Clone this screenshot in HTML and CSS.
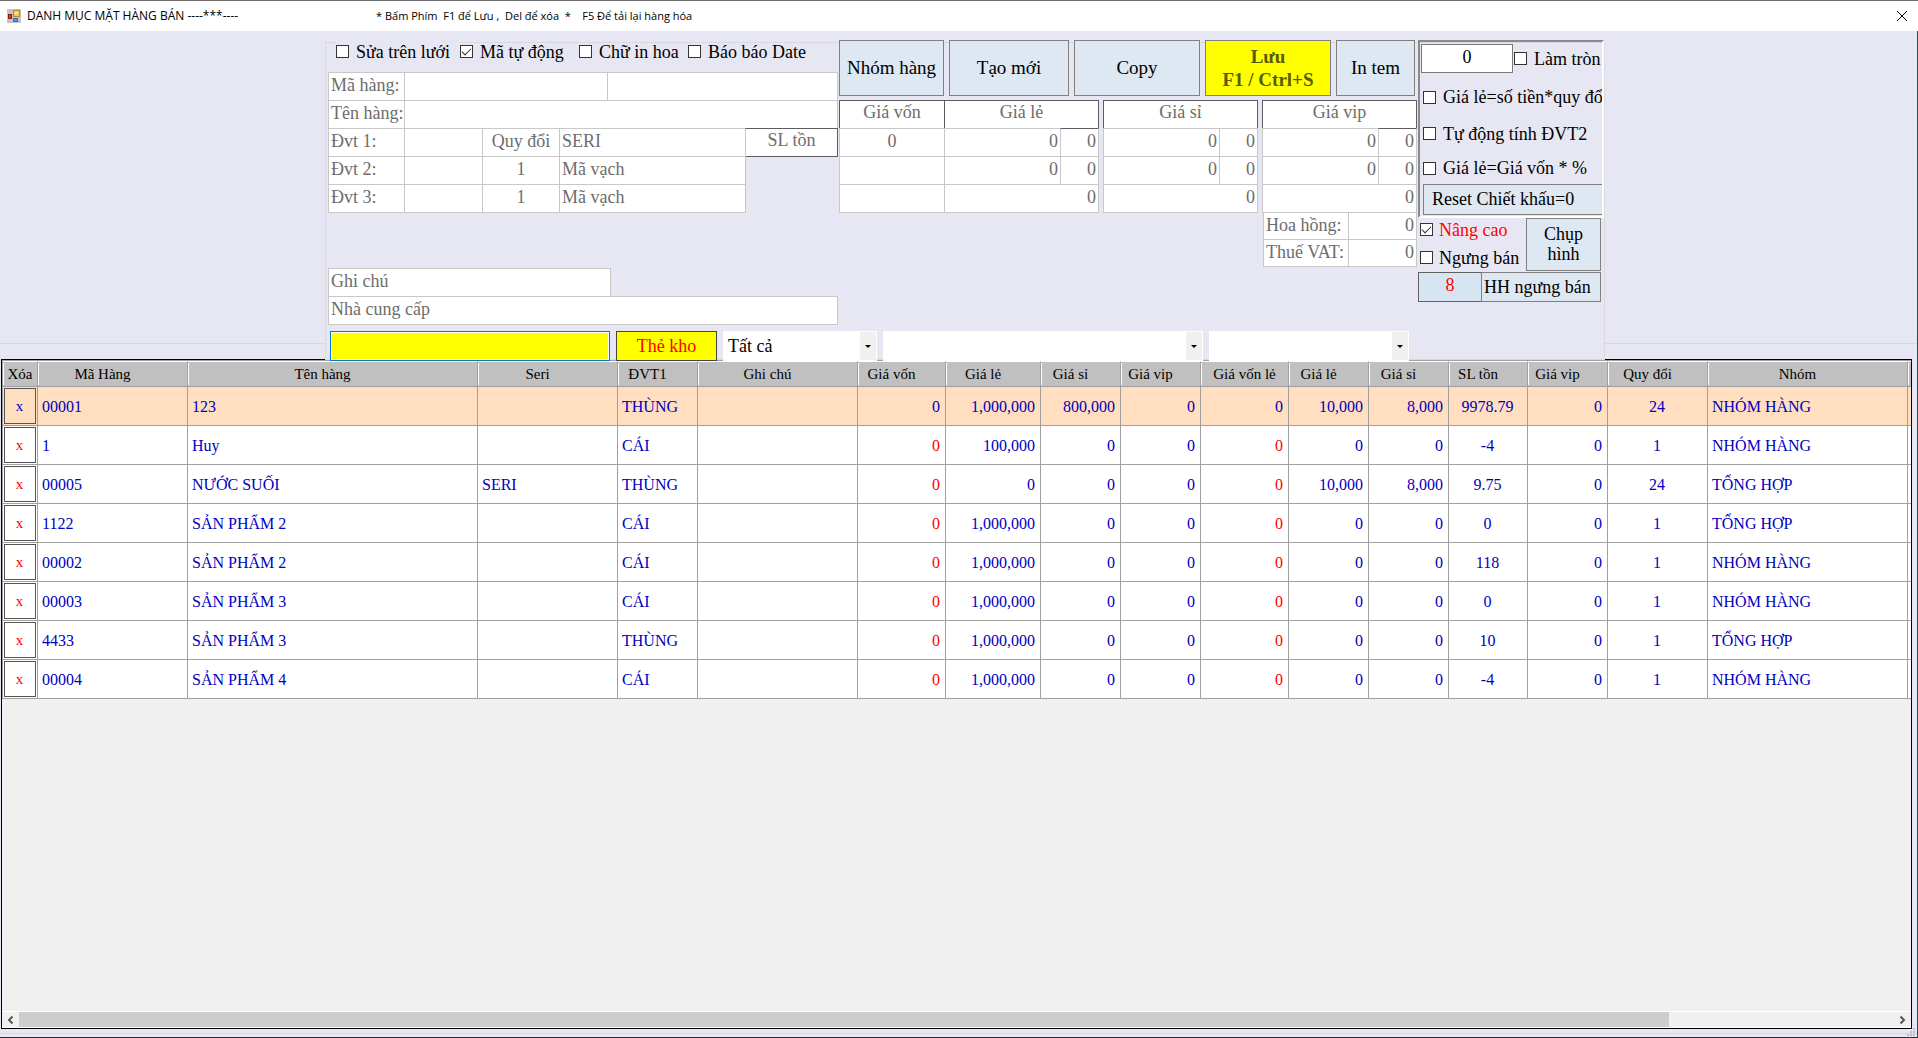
FILE: index.html
```html
<!DOCTYPE html>
<html lang="vi">
  <head>
    <meta charset="UTF-8" />
    <title>DANH MỤC MẶT HÀNG BÁN</title>
    <link rel="stylesheet" href="styles.css" />
  </head>
  <body>
    <header class="titlebar">
      <svg class="app-icon" width="14" height="14" viewBox="0 0 14 14">
        <rect width="14" height="14" fill="#c4c4c4" />
        <rect x="1.5" y="5.5" width="3" height="4" fill="#d8392b" stroke="#8c1a10" />
        <rect x="6.5" y="1.5" width="6" height="6" fill="#fbc94c" stroke="#c08a14" />
        <rect x="6.5" y="9.5" width="4" height="3" fill="#5b93f0" stroke="#3a6cd0" />
        <rect x="8" y="3" width="3" height="2" fill="#fde39a" />
      </svg>
      <h1 class="title">DANH MỤC MẶT HÀNG BÁN ----***----</h1>
      <span class="hint">* Bấm Phím  F1 để Lưu ,  Del để xóa  *    F5 Để tải lại hàng hóa</span>
      <button class="close" aria-label="Đóng">
        <svg width="10" height="10" viewBox="0 0 10 10"><path d="M0 0 L10 10 M10 0 L0 10" stroke="#000" fill="none" /></svg>
      </button>
    </header>

    <main class="workspace">
      <div class="editor">
        <div class="side-area"></div>
        <section class="group">
          <div class="group-top">
            <div class="info">
              <div class="options">
                <label class="check check-first"><input type="checkbox" />Sửa trên lưới</label>
                <label class="check"><input type="checkbox" checked />Mã tự động</label>
                <label class="check"><input type="checkbox" />Chữ in hoa</label>
                <label class="check"><input type="checkbox" />Báo báo Date</label>
              </div>
              <div class="row">
                <label class="cell w-label" for="ma">Mã hàng:</label>
                <input class="cell w-code" id="ma" type="text" />
                <input class="cell grow" type="text" aria-label="Mã phụ" />
              </div>
              <div class="row">
                <label class="cell w-label" for="ten">Tên hàng:</label>
                <input class="cell grow" id="ten" type="text" />
              </div>
              <div class="row">
                <label class="cell w-label" for="dvt1">Đvt 1:</label>
                <input class="cell w-unit" id="dvt1" type="text" />
                <span class="cell w-rate center">Quy đổi</span>
                <input class="cell w-seri" type="text" placeholder="SERI" aria-label="Seri" />
                <span class="cell w-stock center head">SL tồn</span>
              </div>
              <div class="row">
                <label class="cell w-label" for="dvt2">Đvt 2:</label>
                <input class="cell w-unit" id="dvt2" type="text" />
                <input class="cell w-rate center" type="text" value="1" aria-label="Quy đổi 2" />
                <input class="cell w-seri" type="text" placeholder="Mã vạch" aria-label="Mã vạch 2" />
              </div>
              <div class="row">
                <label class="cell w-label" for="dvt3">Đvt 3:</label>
                <input class="cell w-unit" id="dvt3" type="text" />
                <input class="cell w-rate center" type="text" value="1" aria-label="Quy đổi 3" />
                <input class="cell w-seri" type="text" placeholder="Mã vạch" aria-label="Mã vạch 3" />
              </div>
              <div class="row notes">
                <input class="cell w-note" type="text" placeholder="Ghi chú" aria-label="Ghi chú" />
              </div>
              <div class="row">
                <input class="cell grow" type="text" placeholder="Nhà cung cấp" aria-label="Nhà cung cấp" />
              </div>
            </div>

            <div class="pricing">
              <div class="actions">
                <button class="btn b-group">Nhóm hàng</button>
                <button class="btn b-new">Tạo mới</button>
                <button class="btn b-copy">Copy</button>
                <button class="btn b-save">Lưu<br />F1 / Ctrl+S</button>
                <button class="btn b-print">In tem</button>
              </div>
              <div class="prices">
                <div class="price cost">
                  <div class="price-head">Giá vốn</div>
                  <div class="row"><input class="cell grow center" type="text" value="0" aria-label="Giá vốn" /></div>
                  <div class="row"><input class="cell grow center" type="text" aria-label="Giá vốn 2" /></div>
                  <div class="row"><input class="cell grow center" type="text" aria-label="Giá vốn 3" /></div>
                </div>
                <div class="price retail">
                  <div class="price-head">Giá lẻ</div>
                  <div class="row"><input class="cell grow num" type="text" value="0" aria-label="Giá lẻ 1" /><input class="cell w-pct num dark-top" type="text" value="0" aria-label="Giá lẻ 1 %" /></div>
                  <div class="row"><input class="cell grow num" type="text" value="0" aria-label="Giá lẻ 2" /><input class="cell w-pct num" type="text" value="0" aria-label="Giá lẻ 2 %" /></div>
                  <div class="row"><input class="cell grow num" type="text" value="0" aria-label="Giá lẻ 3" /></div>
                </div>
                <div class="price">
                  <div class="price-head">Giá sỉ</div>
                  <div class="row"><input class="cell grow num" type="text" value="0" aria-label="Giá sỉ 1" /><input class="cell w-pct num" type="text" value="0" aria-label="Giá sỉ 1 %" /></div>
                  <div class="row"><input class="cell grow num" type="text" value="0" aria-label="Giá sỉ 2" /><input class="cell w-pct num" type="text" value="0" aria-label="Giá sỉ 2 %" /></div>
                  <div class="row"><input class="cell grow num" type="text" value="0" aria-label="Giá sỉ 3" /></div>
                </div>
                <div class="price">
                  <div class="price-head">Giá vip</div>
                  <div class="row"><input class="cell grow num" type="text" value="0" aria-label="Giá vip 1" /><input class="cell w-pct num dark-top" type="text" value="0" aria-label="Giá vip 1 %" /></div>
                  <div class="row"><input class="cell grow num" type="text" value="0" aria-label="Giá vip 2" /><input class="cell w-pct num" type="text" value="0" aria-label="Giá vip 2 %" /></div>
                  <div class="row"><input class="cell grow num" type="text" value="0" aria-label="Giá vip 3" /></div>
                  <div class="row fee"><label class="cell w-fee" for="hoahong">Hoa hồng:</label><input class="cell grow num" id="hoahong" type="text" value="0" /></div>
                  <div class="row fee"><label class="cell w-fee" for="vat">Thuế VAT:</label><input class="cell grow num" id="vat" type="text" value="0" /></div>
                </div>
              </div>
            </div>

            <div class="extra">
              <div class="advanced">
                <div class="rounding">
                  <input class="round-box" type="text" value="0" aria-label="Số làm tròn" />
                  <label class="check"><input type="checkbox" />Làm tròn</label>
                </div>
                <label class="check"><input type="checkbox" />Giá lẻ=số tiền*quy đổi</label>
                <label class="check"><input type="checkbox" />Tự động tính ĐVT2</label>
                <label class="check"><input type="checkbox" />Giá lẻ=Giá vốn * %</label>
                <button class="btn b-reset">Reset Chiết khấu=0</button>
              </div>
              <div class="state">
                <div class="state-checks">
                  <label class="check red"><input type="checkbox" checked />Nâng cao</label>
                  <label class="check"><input type="checkbox" />Ngưng bán</label>
                </div>
                <button class="btn b-photo">Chụp<br />hình</button>
              </div>
              <div class="stopped">
                <output class="stopped-count">8</output>
                <button class="btn b-stopped">HH ngưng bán</button>
              </div>
            </div>
          </div>

          <div class="filters">
            <input class="search" type="text" aria-label="Tìm kiếm" />
            <button class="stock-card">Thẻ kho</button>
            <span class="combo combo-all"><select aria-label="Lọc"><option>Tất cả</option></select></span>
            <span class="combo combo-group"><select aria-label="Nhóm"><option></option></select></span>
            <span class="combo combo-type"><select aria-label="Loại"><option></option></select></span>
          </div>
        </section>
        <div class="side-area"></div>
      </div>

      <div class="grid-box">
        <div class="grid-view">
          <table class="grid">
            <colgroup>
              <col style="width: 35px" /><col style="width: 150px" /><col style="width: 290px" />
              <col style="width: 140px" /><col style="width: 80px" /><col style="width: 160px" />
              <col style="width: 88px" /><col style="width: 95px" /><col style="width: 80px" />
              <col style="width: 80px" /><col style="width: 88px" /><col style="width: 80px" />
              <col style="width: 80px" /><col style="width: 79px" /><col style="width: 80px" />
              <col style="width: 100px" /><col style="width: 200px" /><col style="width: 288px" />
            </colgroup>
            <thead>
              <tr>
                <th class="tight">Xóa</th><th>Mã Hàng</th><th>Tên hàng</th><th>Seri</th><th>ĐVT1</th><th>Ghi chú</th>
                <th>Giá vốn</th><th>Giá lẻ</th><th>Giá sỉ</th><th>Giá vip</th><th class="tight">Giá vốn lẻ</th><th>Giá lẻ</th>
                <th>Giá sỉ</th><th>SL tồn</th><th>Giá vip</th><th>Quy đổi</th><th>Nhóm</th><th></th>
              </tr>
            </thead>
            <tbody>
              <tr class="selected">
                <td><button class="del">x</button></td><td>00001</td><td>123</td><td></td><td>THÙNG</td><td></td>
                <td>0</td><td>1,000,000</td><td>800,000</td><td>0</td><td>0</td><td>10,000</td>
                <td>8,000</td><td>9978.79</td><td>0</td><td>24</td><td>NHÓM HÀNG</td><td></td>
              </tr>
              <tr>
                <td><button class="del">x</button></td><td>1</td><td>Huy</td><td></td><td>CÁI</td><td></td>
                <td>0</td><td>100,000</td><td>0</td><td>0</td><td>0</td><td>0</td>
                <td>0</td><td>-4</td><td>0</td><td>1</td><td>NHÓM HÀNG</td><td></td>
              </tr>
              <tr>
                <td><button class="del">x</button></td><td>00005</td><td>NƯỚC SUỐI</td><td>SERI</td><td>THÙNG</td><td></td>
                <td>0</td><td>0</td><td>0</td><td>0</td><td>0</td><td>10,000</td>
                <td>8,000</td><td>9.75</td><td>0</td><td>24</td><td>TỔNG HỢP</td><td></td>
              </tr>
              <tr>
                <td><button class="del">x</button></td><td>1122</td><td>SẢN PHẨM 2</td><td></td><td>CÁI</td><td></td>
                <td>0</td><td>1,000,000</td><td>0</td><td>0</td><td>0</td><td>0</td>
                <td>0</td><td>0</td><td>0</td><td>1</td><td>TỔNG HỢP</td><td></td>
              </tr>
              <tr>
                <td><button class="del">x</button></td><td>00002</td><td>SẢN PHẨM 2</td><td></td><td>CÁI</td><td></td>
                <td>0</td><td>1,000,000</td><td>0</td><td>0</td><td>0</td><td>0</td>
                <td>0</td><td>118</td><td>0</td><td>1</td><td>NHÓM HÀNG</td><td></td>
              </tr>
              <tr>
                <td><button class="del">x</button></td><td>00003</td><td>SẢN PHẨM 3</td><td></td><td>CÁI</td><td></td>
                <td>0</td><td>1,000,000</td><td>0</td><td>0</td><td>0</td><td>0</td>
                <td>0</td><td>0</td><td>0</td><td>1</td><td>NHÓM HÀNG</td><td></td>
              </tr>
              <tr>
                <td><button class="del">x</button></td><td>4433</td><td>SẢN PHẨM 3</td><td></td><td>THÙNG</td><td></td>
                <td>0</td><td>1,000,000</td><td>0</td><td>0</td><td>0</td><td>0</td>
                <td>0</td><td>10</td><td>0</td><td>1</td><td>TỔNG HỢP</td><td></td>
              </tr>
              <tr>
                <td><button class="del">x</button></td><td>00004</td><td>SẢN PHẨM 4</td><td></td><td>CÁI</td><td></td>
                <td>0</td><td>1,000,000</td><td>0</td><td>0</td><td>0</td><td>0</td>
                <td>0</td><td>-4</td><td>0</td><td>1</td><td>NHÓM HÀNG</td><td></td>
              </tr>
            </tbody>
          </table>
        </div>
        <div class="scrollbar">
          <button class="arrow" aria-label="Cuộn trái"><svg width="7" height="8" viewBox="0 0 7 8"><path d="M5.5 0.5 L2 4 L5.5 7.5" fill="none" stroke="#555" stroke-width="2" /></svg></button>
          <div class="track"><div class="thumb"></div></div>
          <button class="arrow" aria-label="Cuộn phải"><svg width="7" height="8" viewBox="0 0 7 8"><path d="M1.5 0.5 L5 4 L1.5 7.5" fill="none" stroke="#555" stroke-width="2" /></svg></button>
        </div>
      </div>

      <footer class="statusbar">
        <svg class="grip" width="8" height="8" viewBox="0 0 8 8" fill="#bdbdc4">
          <path d="M6 0h2v2H6zM3 3h2v2H3zM6 3h2v2H6zM0 6h2v2H0zM3 6h2v2H3zM6 6h2v2H6z" />
        </svg>
      </footer>
    </main>
  </body>
</html>
```

FILE: styles.css
```css
:root {
  --bg: #e7e7f3;
  --btn: #dde8f3;
  --line: #c8c8c8;
  --dark: #5f5a60;
  --muted: #6d6d6d;
}

* {
  box-sizing: border-box;
}

body {
  margin: 0;
  height: 100vh;
  display: flex;
  flex-direction: column;
  overflow: hidden;
  background: var(--bg);
  border-top: 1px solid #6e6e6e;
  border-bottom: 1px solid #2b2b35;
  color: #000;
  font: 18px/20px "Liberation Serif", "Times New Roman", serif;
}

button,
input,
select {
  margin: 0;
  padding: 0;
  border: 0;
  border-radius: 0;
  font: inherit;
  color: inherit;
}

/* title bar */
.titlebar {
  position: relative;
  display: flex;
  align-items: center;
  flex: none;
  height: 30px;
  padding-left: 7px;
  background: #fff;
  font: 11px/30px "Segoe UI", "Open Sans", sans-serif;
  white-space: pre;
}
/* strip on the window's top edge */
.titlebar::before {
  content: "";
  position: absolute;
  top: -1px;
  left: calc(50% - 119px);
  width: 241px;
  height: 1px;
  background: linear-gradient(90deg, #e5e5e5 40%, #0078d7 40% 60%, #e5e5e5 60%);
}
.title {
  width: 349px;
  margin: 0 0 0 6px;
  font: inherit;
  font-size: 12px;
}
.close {
  display: flex;
  align-items: center;
  justify-content: center;
  width: 32px;
  height: 30px;
  margin-left: auto;
  background: none;
}

.workspace {
  display: flex;
  flex: 1;
  flex-direction: column;
  min-height: 0;
  border-right: 1px solid #2f4f56;
}

/* editor area */
.editor {
  display: grid;
  grid-template-columns: 325fr 1280px 312fr;
  flex: none;
}
.side-area {
  margin-bottom: 15px;
  border-bottom: 1px solid #d9d9dd;
}
.group {
  position: relative;
  z-index: 1;
  margin: 11px 0 -1px;
  padding-left: 2px;
  border: 1px solid #d9d9dd;
  background: var(--bg);
}
.group-top {
  display: flex;
  align-items: flex-start;
  margin-top: -3px;
}

.check {
  display: flex;
  align-items: center;
  gap: 7px;
  white-space: nowrap;
}
.check input {
  appearance: none;
  flex: none;
  width: 13px;
  height: 13px;
  border: 1px solid #333;
  background: #fff;
}
.check input:checked::before {
  content: "";
  display: block;
  width: 8px;
  height: 4px;
  margin: 2px 0 0 1px;
  border-left: 1px solid #333;
  border-bottom: 1px solid #333;
  transform: rotate(-45deg);
}

.info {
  width: 510px;
}
.options {
  display: grid;
  grid-template-columns: 124px 119px 109px 1fr;
  height: 33px;
  padding-left: 8px;
  align-items: start;
}
.options .check {
  height: 23px;
}
.check-first {
  background: var(--bg);
}

.row {
  display: flex;
  margin-top: -1px;
}
.cell {
  flex: none;
  width: 0;
  height: 29px;
  padding: 0 2px 2px;
  border: 1px solid var(--line);
  background: #fff;
  color: var(--muted);
  line-height: 25px;
  white-space: nowrap;
}
.cell + .cell {
  margin-left: -1px;
}
.cell::placeholder {
  color: var(--muted);
  opacity: 1;
}
.grow {
  flex: 1;
  min-width: 0;
}
.center {
  text-align: center;
}
.num {
  text-align: right;
}
.w-label {
  width: 77px;
}
.w-code {
  width: 204px;
}
.w-unit {
  width: 79px;
}
.w-rate {
  width: 78px;
}
.w-seri {
  width: 187px;
}
.w-stock {
  width: 93px;
}
.w-note {
  width: 283px;
}
.w-pct {
  width: 39px;
}
.w-fee {
  width: 86px;
}
.head {
  border-color: var(--dark);
  border-left-color: var(--line);
  line-height: 23px;
}
.dark-top {
  border-top-color: var(--dark);
}
.notes {
  margin-top: 55px;
}

/* buttons */
.btn {
  padding-bottom: 2px;
  border: 1px solid #808080;
  background: var(--btn);
  white-space: nowrap;
}
.pricing {
  margin-left: 1px;
}
.actions {
  display: flex;
  gap: 5px;
  height: 56px;
  margin-bottom: 4px;
  font-size: 19px;
  line-height: 23px;
}
.b-group {
  width: 105px;
}
.b-new {
  width: 120px;
}
.b-copy,
.b-save {
  width: 126px;
}
.b-save {
  padding: 0;
  background: #ff0;
  color: #5a5a00;
  font-weight: bold;
}
.b-print {
  width: 79px;
}

/* price blocks */
.prices {
  display: flex;
  align-items: flex-start;
}
.price {
  width: 155px;
  margin-left: 4px;
}
.cost {
  width: 106px;
  margin-left: 0;
}
.retail {
  margin-left: -1px;
}
.price-head {
  height: 29px;
  border: 1px solid var(--dark);
  border-bottom: 0;
  background: #fff;
  color: var(--muted);
  line-height: 23px;
  text-align: center;
}
.fee {
  margin-left: 1px;
}
.fee .cell {
  height: 28px;
  line-height: 24px;
}

/* right column */
.extra {
  flex: 1;
  min-width: 0;
  margin-left: 1px;
}
.advanced {
  display: grid;
  grid-template-rows: 37px 36px 37px 32px 31px;
  overflow: hidden;
  height: 178px;
  padding-left: 3px;
  border: 2px solid #fff;
  border-top-color: #8a8a8a;
  border-left-color: #8a8a8a;
}
.rounding {
  display: flex;
  align-items: flex-start;
  gap: 1px;
  margin-left: -2px;
  padding-top: 2px;
}
.rounding .check {
  height: 29px;
}
.round-box {
  width: 92px;
  height: 29px;
  padding-bottom: 2px;
  border: 1px solid #7a7a7a;
  background: #fff;
  text-align: center;
}
.b-reset {
  padding-left: 8px;
  border-right: 0;
  text-align: left;
}
.state {
  display: flex;
  height: 53px;
}
.state-checks {
  display: grid;
  grid-template-rows: 23px 33px;
  width: 108px;
  padding-left: 2px;
}
.state-checks .check {
  gap: 6px;
}
.red {
  color: #f00;
}
.b-photo {
  width: 75px;
}
.stopped {
  display: flex;
  height: 30px;
  margin-top: 1px;
}
.stopped-count {
  width: 64px;
  border: 1px solid #606060;
  background: #d7e5f2;
  color: #f00;
  line-height: 24px;
  text-align: center;
}
.b-stopped {
  width: 120px;
  margin-left: -1px;
  padding: 0 0 0 2px;
  text-align: left;
}

/* filter row */
.filters {
  display: flex;
  gap: 6px;
  height: 30px;
  margin: 6px 0 -2px 2px;
}
.search {
  width: 280px;
  border: 1px solid #0078d7;
  background: #ff0;
  box-shadow: inset 0 0 0 1px #fff;
  padding: 0 4px;
}
.stock-card {
  width: 101px;
  border: 1px solid #444;
  background: #ff0;
  color: #f00;
}
.combo {
  position: relative;
  background: #fff;
}
.combo select {
  appearance: none;
  width: 100%;
  height: 30px;
  padding-left: 5px;
  background: none;
}
.combo::after {
  content: "";
  position: absolute;
  top: 1px;
  right: 1px;
  width: 16px;
  height: 28px;
  background: #f0f0f0;
  pointer-events: none;
}
.combo::before {
  content: "";
  position: absolute;
  z-index: 1;
  top: 14px;
  right: 6px;
  border: 3px solid transparent;
  border-top-color: #000;
  border-bottom: 0;
  pointer-events: none;
}
.combo-all {
  width: 154px;
}
.combo-group {
  width: 320px;
}
.combo-type {
  width: 200px;
}

/* data grid */
.grid-box {
  display: flex;
  flex: 1;
  flex-direction: column;
  min-height: 0;
  margin: 0 5px 0 1px;
  border: 1px solid #000;
  background: #f0f0f0;
}
.grid-view {
  flex: 1;
  overflow: hidden;
}
.grid {
  width: 2194px;
  table-layout: fixed;
  border-collapse: separate;
  border-spacing: 0;
  border: solid #a0a0a0;
  border-width: 1px 0 0 1px;
  font-size: 16px;
}
.grid th {
  height: 26px;
  padding: 0 20px 0 0;
  border: solid #a0a0a0;
  border-width: 1px 1px 1px 0;
  border-top-color: #fff;
  background: linear-gradient(#fff, #fff) 0 1px / 1px 22px no-repeat #c0c0c0;
  font-size: 15px;
  font-weight: normal;
  line-height: 20px;
  white-space: nowrap;
}
.grid .tight {
  padding: 0;
}
.grid td {
  height: 39px;
  padding: 2px 5px 0 4px;
  border: solid #a0a0a0;
  border-width: 0 1px 1px 0;
  background: #fff;
  color: #0000c0;
  text-align: right;
  white-space: nowrap;
}
.grid td:nth-child(-n + 6),
.grid td:nth-child(17) {
  text-align: left;
}
.grid td:nth-child(14),
.grid td:nth-child(16) {
  text-align: center;
}
.grid td:nth-child(1),
.grid td:nth-child(7),
.grid td:nth-child(11) {
  color: #f00;
}
.grid td:first-child {
  padding: 1px;
}
.grid .selected td {
  background: #ffdfc0;
  color: #0000c0;
}
.del {
  display: block;
  width: 32px;
  height: 36px;
  padding-right: 1px;
  border: 1px solid #555;
  background: none;
  font-size: 15px;
}

.scrollbar {
  display: flex;
  flex: none;
  height: 17px;
  border-top: 1px solid #fff;
  border-bottom: 1px solid #fff;
}
.arrow {
  display: flex;
  align-items: center;
  justify-content: center;
  width: 17px;
  background: none;
}
.track {
  flex: 1;
}
.thumb {
  width: 88%;
  height: 100%;
  background: #cdcdcd;
}

.statusbar {
  position: relative;
  flex: none;
  height: 4px;
  margin-top: 4px;
  border-top: 1px solid #d9d9dd;
}
.grip {
  position: absolute;
  right: 2px;
  bottom: 1px;
}
```
